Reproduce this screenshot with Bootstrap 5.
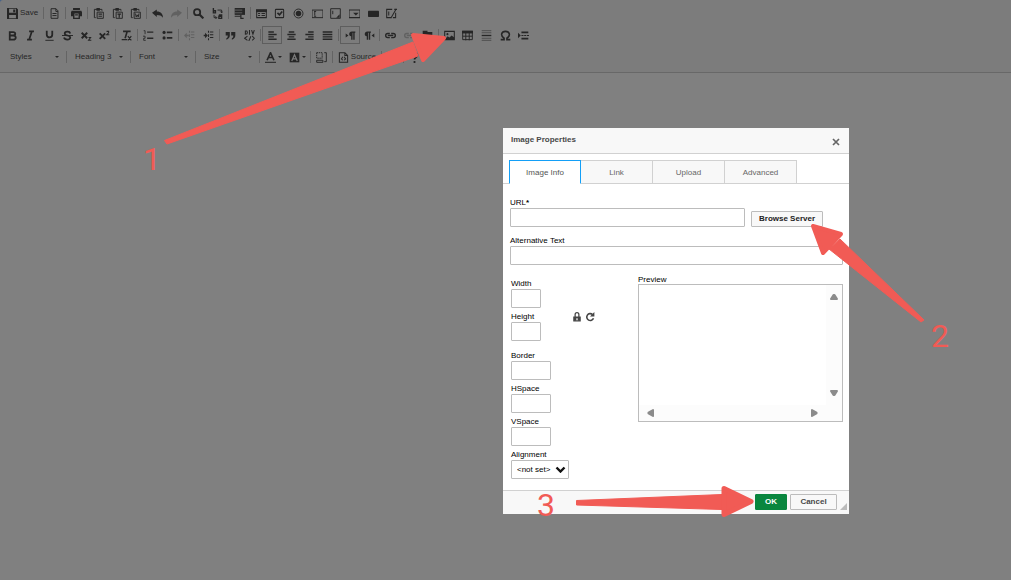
<!DOCTYPE html>
<html lang="en">
<head>
<meta charset="utf-8">
<meta name="viewport" content="width=device-width, initial-scale=1">
<title>Image Properties</title>
<link href="https://cdn.jsdelivr.net/npm/bootstrap@5.3.0/dist/css/bootstrap.min.css" rel="stylesheet">
<style>
:root{--ink:#262626;--rule:#686868;--line:#d1d1d1;--field:#bcbcbc;--note:#f15b55}
body{font-family:"Liberation Sans",Arial,sans-serif;font-size:8px;line-height:10px;background:#808080;color:#000;min-height:100vh}
.editor-top{background:#44608a}
.tools{background:#7c7c7c;border-bottom:1px solid var(--rule);border-top-left-radius:3px;padding:2px 3px 4px}
.tool-row{height:22px}
.tools button{color:var(--ink);background:none;border:0;padding:0;height:18px;flex:1 1 0;min-width:0;display:flex;align-items:center;justify-content:center;gap:2px;font-size:8px}
.tools button.pressed{border:1px solid #5e5e5e}
.tools button:disabled{opacity:.3}
.tools .sep{width:1px;height:12px;margin:0 1px;background:#646464;flex:none}
.tools svg.ico{width:11px;height:11px;flex:none}
.ico{fill:none;stroke:currentColor;stroke-width:1.8}
.f{fill:currentColor;stroke:none}
.g1{width:19px}.g2{width:38px}.g3{width:56px}.g4{width:75px}.g5{width:93px}.g6{width:111px}.g8{width:149px}
.g-save{width:39px}.g-color{width:48px}.g-source{width:46px}
.combo{width:62px}.combo.slim{width:61px}
.tools .combo button{justify-content:space-between;padding:0 6px 0 7px}
.caret{width:0;height:0;border:2px solid transparent;border-top-color:currentColor;border-bottom:0}
.notes{left:0;top:0;overflow:visible;pointer-events:none;fill:var(--note);z-index:5}
.notes path{stroke:var(--note);stroke-linejoin:round}
.notes text{font-family:Roboto,"Liberation Sans",sans-serif;font-size:32px}
.props{width:346px;right:162px;top:128px;background:#fff}
.props-head{height:26px;background:#f8f8f8;border-bottom:1px solid var(--line);padding:0 8px 1px;color:#484848}
.props-head h1{font-size:8px;line-height:10px}
.props-head button{border:0;background:none;padding:0;width:10px;height:10px;color:#666;line-height:0}
.tab-strip{padding:6px 6px 0;border-bottom:1px solid var(--line)}
.tab-strip .nav-link{width:72px;height:24px;margin-bottom:-1px;padding:0;border:1px solid var(--line);border-left-width:0;border-radius:0;background:#f8f8f8;color:#666;font-size:8px;line-height:24px;text-align:center}
.tab-strip .nav-link.active{border:1px solid #139ff7;border-bottom-color:#fff;background:#fff;color:#555}
.props-body{padding:13px 6px 11px 7px}
.props label{display:block;height:11px;line-height:12px;white-space:nowrap}
.props input,.props select{display:block;height:19px;border:1px solid var(--field);border-radius:1px;padding:0 4px;font-size:8px;background:#fff;color:#000}
.url-row{gap:6px;padding-right:20px}
.sizing{padding-top:9px}
.small-fields{padding-left:1px;width:128px}
.field-set{display:grid;gap:3px}
.apart{padding-top:6px}
.w-size{width:30px}.w-space{width:40px}
.pick select{width:58px;padding:0 5px;appearance:none}
.pick svg{right:3px;top:6px;pointer-events:none}
.cmd{height:16px;border:1px solid var(--field);border-radius:1px;background:#f8f8f8;color:#484848;font-size:8px;font-weight:bold;line-height:14px;padding:0}
.cmd.ok{width:32px;background:#09863e;border-color:#09863e;color:#fff}
.cmd.no{width:47px}
.cmd.browse{width:72px;color:#222}
.locks{padding:34px 0 0 3px;gap:3px;color:#454545}
.preview-label{margin-bottom:-1px}
.view{height:138px;border:1px solid var(--field);display:grid;grid-template-columns:1fr 16px;grid-template-rows:1fr 16px}
.bar{background:#fcfcfc}
.bar svg{fill:#8b8b8b;stroke:#8b8b8b;stroke-linejoin:round}
.props-foot{height:24px;background:#f8f8f8;border-top:1px solid var(--line);padding:3px 2px 0 0;gap:3px}
</style>
</head>
<body>
<svg class="d-none" xmlns="http://www.w3.org/2000/svg">
<symbol id="save" viewBox="0 0 16 16"><path class="f" fill-rule="evenodd" d="M0 0h14l2 2v14H0zM3 1v6h10V1zM3 10v5h10v-5zM9 2h3v4H9z"/></symbol>
<symbol id="page" viewBox="0 0 16 16"><path d="M3 1h7l3 3v11H3zM10 1v4h3M5 8h6M5 11h6" stroke-width="1.4"/></symbol>
<symbol id="print" viewBox="0 0 16 16"><path class="f" fill-rule="evenodd" d="M3 0h10v3H3zM1 4h14l1 2v6h-3v4H3v-4H0V6zM5 8v6h6V8z"/><path d="M6 10h4"/></symbol>
<symbol id="clip" viewBox="0 0 16 16"><path d="M4 14H2V2h11v2M6 6h9v9H6z" stroke-width="1.4"/><path class="f" d="M5 0h5v4H5z"/></symbol>
<symbol id="undo" viewBox="0 0 16 16"><path class="f" d="M0 7l7-5v3c6 0 9 4 9 9-2-3-5-4-9-4v3z"/></symbol>
<symbol id="find" viewBox="0 0 16 16"><circle cx="6" cy="6" r="4.5" stroke-width="2.6"/><path d="M9 9l6 6" stroke-width="3.2"/></symbol>
<symbol id="replace" viewBox="0 0 16 16"><path d="M2 0v7h3V4H2M10 10h4v5h-4v-3h4" stroke-width="2"/><path d="M8 3h6v4M12 5l2 2 2-2M3 10v4h4M5 12l2 2-2 2" stroke-width="1.4"/></symbol>
<symbol id="all" viewBox="0 0 16 16"><path class="f" d="M1 0h15v10H1z"/><path d="M1 12h8M10 10v5h4"/><path d="M1 3h11M1 7h11" stroke="#7c7c7c" stroke-width="1"/></symbol>
<symbol id="form" viewBox="0 0 16 16"><path d="M1 3h14v11H1zM3 8h3M8 8h5M3 11h3M8 11h5" stroke-width="1.5"/><path class="f" d="M0 2h16v4H0z"/></symbol>
<symbol id="check" viewBox="0 0 16 16"><rect x="2" y="2" width="12" height="12" rx="1" stroke-width="1.5"/><path d="M5 7l3 3 4-5" stroke-width="2.4"/></symbol>
<symbol id="radio" viewBox="0 0 16 16"><circle cx="8" cy="8" r="6.5" stroke-width="1.4"/><circle class="f" cx="8" cy="8" r="4"/></symbol>
<symbol id="textfield" viewBox="0 0 16 16"><path d="M0 3h16v11H0zM4 5v6M3 5h3M3 12h3" stroke-width="1.4"/></symbol>
<symbol id="area" viewBox="0 0 16 16"><path d="M1 1h14v14H1zM4 4v5" stroke-width="1.4"/><path class="f" d="M14 9v5H9z"/></symbol>
<symbol id="choice" viewBox="0 0 16 16"><path d="M0 3h16v11H0z" stroke-width="1.5"/><path class="f" d="M6 7h8l-4 4z"/></symbol>
<symbol id="push" viewBox="0 0 16 16"><rect class="f" y="4" width="16" height="9" rx="1"/></symbol>
<symbol id="imgbtn" viewBox="0 0 16 16"><path d="M8 14H1V2h8M12 2h4M10 14h4V7M15 1L7 15M4 5v6" stroke-width="1.5"/></symbol>
<symbol id="ol" viewBox="0 0 16 16"><path d="M6 3h9M6 12h9" stroke-width="2"/><path d="M1 1h2v5M0 9h3v3H1v3h3" stroke-width="1.2"/></symbol>
<symbol id="ul" viewBox="0 0 16 16"><path d="M7 3.500h8M7 11.500h8" stroke-width="2.4"/><circle class="f" cx="3" cy="3.500" r="2.300"/><circle class="f" cx="3" cy="11.500" r="2.300"/></symbol>
<symbol id="indent" viewBox="0 0 16 16"><path d="M8 1v3M8 12v3M8 6v4M10 3h5M10 7h5M10 11h5" stroke-width="1.5"/><path class="f" d="M3 4l4 4-4 4V9H1V7h2z"/></symbol>
<symbol id="outdent" viewBox="0 0 16 16"><path d="M8 1v3M8 12v3M8 6v4M10 3h5M10 7h5M10 11h5" stroke-width="1.5"/><path class="f" d="M4 4L0 8l4 4V9h3V7H4z"/></symbol>
<symbol id="quote" viewBox="0 0 16 16"><path class="f" d="M1 3h6v5c0 3-2 5-5 6v-2c2-1 2-2 2-4H1zM9 3h6v5c0 3-2 5-5 6v-2c2-1 2-2 2-4H9z"/></symbol>
<symbol id="div" viewBox="0 0 16 16"><path d="M2 1v5c4 0 4-5 0-5M8 0v7M11 0l2 6 2-6M5 9l-4 3 4 3M10 9l-3 7M12 9l3 3-3 3" stroke-width="1.5"/></symbol>
<symbol id="left" viewBox="0 0 16 16"><path d="M2 3h8M2 6.500h12M2 10h8M2 13.500h12" stroke-width="2.1"/></symbol>
<symbol id="center" viewBox="0 0 16 16"><path d="M4 3h8M2 6.500h12M4 10h8M2 13.500h12" stroke-width="2.1"/></symbol>
<symbol id="right" viewBox="0 0 16 16"><path d="M6 3h8M2 6.500h12M6 10h8M2 13.500h12" stroke-width="2.1"/></symbol>
<symbol id="justify" viewBox="0 0 16 16"><path d="M1 3h14M1 6.500h14M1 10h14M1 13.500h14" stroke-width="2.1"/></symbol>
<symbol id="ltr" viewBox="0 0 16 16"><path class="f" d="M1 5l4 3-4 3zM15 2v2h-1v10h-2V4h-1v10H9V9C5 9 5 2 10 2z"/></symbol>
<symbol id="rtl" viewBox="0 0 16 16"><path class="f" d="M15 5l-4 3 4 3zM10 2v2H9v10H7V4H6v10H4V9C0 9 0 2 5 2z"/></symbol>
<symbol id="link" viewBox="0 0 16 16"><path d="M7 11H4a3 3 0 010-6h3M9 5h3a3 3 0 010 6H9M4 8h8" stroke-width="2"/></symbol>
<symbol id="flag" viewBox="0 0 16 16"><path class="f" d="M1 1h7v2h7v8H8V9H3v7H1z"/></symbol>
<symbol id="image" viewBox="0 0 16 16"><path d="M1 2h14v12H1z" stroke-width="1.5"/><path class="f" d="M2 13l3-4 3 2 3-3 4 3v3H2z"/><circle class="f" cx="5" cy="6" r="1.500"/></symbol>
<symbol id="table" viewBox="0 0 16 16"><path d="M1 2h14v12H1zM1 9h14M5.500 3v12M10.500 3v12" stroke-width="1.4"/><path class="f" d="M0 1h16v4H0z"/></symbol>
<symbol id="hr" viewBox="0 0 16 16"><path d="M1 1h14M1 4h14M1 12h14M1 15h14" stroke-width="1.3" opacity=".6"/><path d="M1 8h14" stroke-width="2"/></symbol>
<symbol id="omega" viewBox="0 0 16 16"><path d="M1 14h5v-2C0 8 2 2 8 2s8 6 2 10v2h5" stroke-width="2.2"/></symbol>
<symbol id="break" viewBox="0 0 16 16"><path class="f" d="M0 4l4 4-4 4z"/><path d="M5 3.500h10M5 12.500h10" stroke-width="2.6"/><path d="M5 8h3M9 8h3M13 8h3" stroke-width="1.8"/></symbol>
<symbol id="blocks" viewBox="0 0 16 16"><path d="M1 1h8v8H1z" stroke-dasharray="2 1" stroke-width="1.4"/><path d="M12 1h3v13h-3M1 12h9v3H1z" stroke-width="1.4"/></symbol>
<symbol id="source" viewBox="0 0 16 16"><path d="M2 1h8l4 4v10H2zM10 1v4h4M7 7l-2 3 2 2M9 7l2 3-2 2" stroke-width="1.5"/></symbol>
<symbol id="max" viewBox="0 0 16 16"><path d="M9 2h5v5M14 2L2 14M2 9v5h5"/></symbol>
</svg>

<header class="editor-top position-relative">
<div class="tools" role="toolbar" aria-label="Editor toolbar">
<div class="tool-row d-flex align-items-center">
<div class="d-flex g-save"><button><svg class="ico"><use href="#save"/></svg>Save</button></div><i class="sep"></i>
<div class="d-flex g1"><button aria-label="New page"><svg class="ico"><use href="#page"/></svg></button></div><i class="sep"></i>
<div class="d-flex g1"><button aria-label="Print"><svg class="ico"><use href="#print"/></svg></button></div><i class="sep"></i>
<div class="d-flex g3"><button aria-label="Paste"><svg class="ico" viewBox="0 0 16 16"><use href="#clip"/><path d="M8 9h5M8 12h5"/></svg></button><button aria-label="Paste as text"><svg class="ico" viewBox="0 0 16 16"><use href="#clip"/><path d="M8 9h5M10.500 9v5"/></svg></button><button aria-label="Paste from Word"><svg class="ico" viewBox="0 0 16 16"><use href="#clip"/><path d="M8 8l1 5 1.500-3 1.500 3 1-5" stroke-width="1.4"/></svg></button></div><i class="sep"></i>
<div class="d-flex g2"><button aria-label="Undo"><svg class="ico"><use href="#undo"/></svg></button><button aria-label="Redo" disabled><svg class="ico" viewBox="0 0 16 16"><path class="f" d="M16 7L9 2v3c-6 0-9 4-9 9 2-3 5-4 9-4v3z"/></svg></button></div><i class="sep"></i>
<div class="d-flex g2"><button aria-label="Find"><svg class="ico"><use href="#find"/></svg></button><button aria-label="Replace"><svg class="ico"><use href="#replace"/></svg></button></div><i class="sep"></i>
<div class="d-flex g1"><button aria-label="Select all"><svg class="ico"><use href="#all"/></svg></button></div><i class="sep"></i>
<div class="d-flex g8"><button aria-label="Form"><svg class="ico"><use href="#form"/></svg></button><button aria-label="Checkbox"><svg class="ico"><use href="#check"/></svg></button><button aria-label="Radio button"><svg class="ico"><use href="#radio"/></svg></button><button aria-label="Text field"><svg class="ico"><use href="#textfield"/></svg></button><button aria-label="Textarea"><svg class="ico"><use href="#area"/></svg></button><button aria-label="Selection field"><svg class="ico"><use href="#choice"/></svg></button><button aria-label="Button"><svg class="ico"><use href="#push"/></svg></button><button aria-label="Image button"><svg class="ico"><use href="#imgbtn"/></svg></button></div>
</div>
<div class="tool-row d-flex align-items-center">
<div class="d-flex g6"><button aria-label="Bold"><svg class="ico" viewBox="0 0 16 16"><path d="M4 3h5c4 0 4 5 0 5H4zM4 8h5c5 0 5 6 0 6H4z" stroke-width="2.6"/></svg></button><button aria-label="Italic"><svg class="ico" viewBox="0 0 16 16"><path d="M6 2h7M3 14h7M10 2L6 14" stroke-width="2.4"/></svg></button><button aria-label="Underline"><svg class="ico" viewBox="0 0 16 16"><path d="M4 1v6c0 5 8 5 8 0V1" stroke-width="2.6"/><path d="M2 15h12" stroke-width="1.4"/></svg></button><button aria-label="Strikethrough"><svg class="ico" viewBox="0 0 16 16"><path d="M12 5c-1-4-8-3-8 0 0 4 8 2 8 6 0 4-8 4-9 0" stroke-width="2.6"/><path d="M0 8h16" stroke-width="1.4"/></svg></button><button aria-label="Subscript"><svg class="ico" viewBox="0 0 16 16"><path d="M1 4l8 8M9 4l-8 8" stroke-width="2.8"/><path d="M11 11h3l-3 4h4" stroke-width="1.5"/></svg></button><button aria-label="Superscript"><svg class="ico" viewBox="0 0 16 16"><path d="M1 5l8 8M9 5l-8 8" stroke-width="2.8"/><path d="M11 2h3v2l-3 3h4" stroke-width="1.5"/></svg></button></div><i class="sep"></i>
<div class="d-flex g1"><button aria-label="Remove format"><svg class="ico" viewBox="0 0 16 16"><path d="M3 2h11M9 2L6 12" stroke-width="2.4"/><path d="M1 14h8M10 9l5 6M15 9l-5 6" stroke-width="1.7"/></svg></button></div><i class="sep"></i>
<div class="d-flex g2"><button aria-label="Numbered list"><svg class="ico"><use href="#ol"/></svg></button><button aria-label="Bulleted list"><svg class="ico"><use href="#ul"/></svg></button></div><i class="sep"></i>
<div class="d-flex g2"><button aria-label="Decrease indent" disabled><svg class="ico"><use href="#outdent"/></svg></button><button aria-label="Increase indent"><svg class="ico"><use href="#indent"/></svg></button></div><i class="sep"></i>
<div class="d-flex g2"><button aria-label="Block quote"><svg class="ico"><use href="#quote"/></svg></button><button aria-label="Div container"><svg class="ico"><use href="#div"/></svg></button></div><i class="sep"></i>
<div class="d-flex g4"><button class="pressed" aria-label="Align left"><svg class="ico"><use href="#left"/></svg></button><button aria-label="Center"><svg class="ico"><use href="#center"/></svg></button><button aria-label="Align right"><svg class="ico"><use href="#right"/></svg></button><button aria-label="Justify"><svg class="ico"><use href="#justify"/></svg></button></div><i class="sep"></i>
<div class="d-flex g2"><button class="pressed" aria-label="Left to right"><svg class="ico"><use href="#ltr"/></svg></button><button aria-label="Right to left"><svg class="ico"><use href="#rtl"/></svg></button></div><i class="sep"></i>
<div class="d-flex g3"><button aria-label="Link"><svg class="ico"><use href="#link"/></svg></button><button aria-label="Unlink" disabled><svg class="ico"><use href="#link"/></svg></button><button aria-label="Anchor"><svg class="ico"><use href="#flag"/></svg></button></div><i class="sep"></i>
<div class="d-flex g5"><button aria-label="Image"><svg class="ico"><use href="#image"/></svg></button><button aria-label="Table"><svg class="ico"><use href="#table"/></svg></button><button aria-label="Horizontal line"><svg class="ico"><use href="#hr"/></svg></button><button aria-label="Special character"><svg class="ico"><use href="#omega"/></svg></button><button aria-label="Page break"><svg class="ico"><use href="#break"/></svg></button></div>
</div>
<div class="tool-row d-flex align-items-center">
<div class="d-flex combo"><button>Styles<i class="caret"></i></button></div><i class="sep"></i>
<div class="d-flex combo slim"><button>Heading 3<i class="caret"></i></button></div><i class="sep"></i>
<div class="d-flex combo"><button>Font<i class="caret"></i></button></div><i class="sep"></i>
<div class="d-flex combo slim"><button>Size<i class="caret"></i></button></div><i class="sep"></i>
<div class="d-flex g-color"><button aria-label="Text color"><svg class="ico" viewBox="0 0 16 16"><path d="M3 12L8 1l5 11M5 8h6" stroke-width="2.4"/><path d="M0 15h16" stroke-width="1.5"/></svg><i class="caret"></i></button><button aria-label="Background color"><svg class="ico" viewBox="0 0 16 16"><path class="f" d="M1 1h14v14H1z"/><path d="M4 13L8 4l4 9M6 10h4" stroke="#7c7c7c"/></svg><i class="caret"></i></button></div><i class="sep"></i>
<div class="d-flex g1"><button aria-label="Show blocks"><svg class="ico"><use href="#blocks"/></svg></button></div><i class="sep"></i>
<div class="d-flex g-source"><button><svg class="ico"><use href="#source"/></svg>Source</button></div><i class="sep"></i>
<div class="d-flex g1"><button aria-label="Maximize"><svg class="ico"><use href="#max"/></svg></button></div><i class="sep"></i>
<div class="d-flex g1"><button aria-label="About"><svg class="ico" viewBox="0 0 16 16"><path d="M5 5c0-5 8-4 7 0 0 3-4 2-4 6M8 13v3" stroke-width="2.6"/></svg></button></div>
</div>
</div>
<svg class="notes position-absolute" width="460" height="175"><path stroke-width="1" d="M164.500 140.500L413 42l5 14-251 88z"/><path stroke-width="4" d="M413 35l31 3-21 22z"/><text x="143" y="170">1</text></svg>
</header>

<section class="props position-absolute" role="dialog" aria-labelledby="dlg-title">
<div class="props-head d-flex align-items-center justify-content-between">
<h1 id="dlg-title" class="fw-bold m-0">Image Properties</h1>
<button aria-label="Close" class="mt-1"><svg width="8" height="8" viewBox="0 0 8 8"><path d="M1 1l6 6M7 1L1 7" stroke="currentColor" stroke-width="1.700"/></svg></button>
</div>
<nav class="tab-strip nav">
<a class="nav-link active" href="#info">Image Info</a><a class="nav-link" href="#href">Link</a><a class="nav-link" href="#upload">Upload</a><a class="nav-link" href="#advanced">Advanced</a>
</nav>
<div class="props-body">
<div class="url-row d-flex align-items-end mb-2">
<div class="flex-grow-1"><label for="url">URL<b>*</b></label><input id="url" type="text" class="w-100"></div>
<button class="cmd browse">Browse Server</button>
</div>
<label for="alt">Alternative Text</label>
<input id="alt" type="text" class="w-100">
<div class="sizing d-flex">
<div class="small-fields d-flex pt-1">
<div class="field-set">
<div><label for="wd">Width</label><input id="wd" type="text" class="w-size"></div>
<div><label for="ht">Height</label><input id="ht" type="text" class="w-size"></div>
<div class="apart"><label for="bd">Border</label><input id="bd" type="text" class="w-space"></div>
<div><label for="hs">HSpace</label><input id="hs" type="text" class="w-space"></div>
<div><label for="vs">VSpace</label><input id="vs" type="text" class="w-space"></div>
<div><label for="al">Alignment</label><div class="pick position-relative"><select id="al"><option>&lt;not set&gt;</option></select><svg class="position-absolute" width="11" height="7" viewBox="0 0 11 7"><path d="M1.500 1.500l4 4 4-4" fill="none" stroke="#111" stroke-width="2.400"/></svg></div></div>
</div>
<div class="locks d-flex align-items-start">
<svg width="10" height="10" viewBox="0 0 16 16" fill="none" stroke="currentColor" stroke-width="2"><path d="M5 8V4c0-4 6-4 6 0v4"/><path fill="currentColor" d="M3 8h10v6H3z"/><path stroke="#fff" d="M8 10v3"/></svg>
<svg width="10" height="10" viewBox="0 0 16 16" fill="none" stroke="currentColor" stroke-width="2.600"><path d="M12 4a5.500 5.500 0 10 1.500 6"/><path fill="currentColor" stroke="none" d="M15 0v7H8z"/></svg>
</div>
</div>
<div class="flex-grow-1">
<label class="preview-label" id="pv">Preview</label>
<div class="view" aria-labelledby="pv">
<div></div>
<div class="bar d-flex flex-column justify-content-between align-items-center py-2"><svg width="10" height="8" viewBox="0 0 10 8"><path d="M4.500 2h1L8 6H2z" stroke-width="2"/></svg><svg width="10" height="8" viewBox="0 0 10 8"><path d="M4.500 6h1L8 2H2z" stroke-width="2"/></svg></div>
<div class="bar d-flex justify-content-between align-items-center px-2"><svg width="8" height="10" viewBox="0 0 8 10"><path d="M1.500 4.500v1L6 8V2z" stroke-width="2"/></svg><svg width="8" height="10" viewBox="0 0 8 10"><path d="M6.500 4.500v1L2 8V2z" stroke-width="2"/></svg></div>
<div class="bar"></div>
</div>
</div>
</div>
</div>
<div class="props-foot d-flex justify-content-end">
<button class="cmd ok">OK</button><button class="cmd no">Cancel</button>
<svg class="align-self-end mb-1" width="7" height="7"><path d="M7 0v7H0z" fill="#bbb"/></svg>
</div>
<svg class="notes position-absolute" width="346" height="386">
<path stroke-width="4" d="M310 98l28 8-18 19z"/><path stroke-width="1" d="M337 111l84 81-3 2-92-73z"/>
<path stroke-width="1" d="M73.500 372.500L219 366.500v15L73.500 377z"/><path stroke-width="5" d="M221 360.500l27 13-27 13z"/>
<text x="428" y="219">2</text><text x="34" y="388">3</text></svg>
</section>
<script src="https://cdn.jsdelivr.net/npm/bootstrap@5.3.0/dist/js/bootstrap.bundle.min.js"></script>
</body>
</html>
